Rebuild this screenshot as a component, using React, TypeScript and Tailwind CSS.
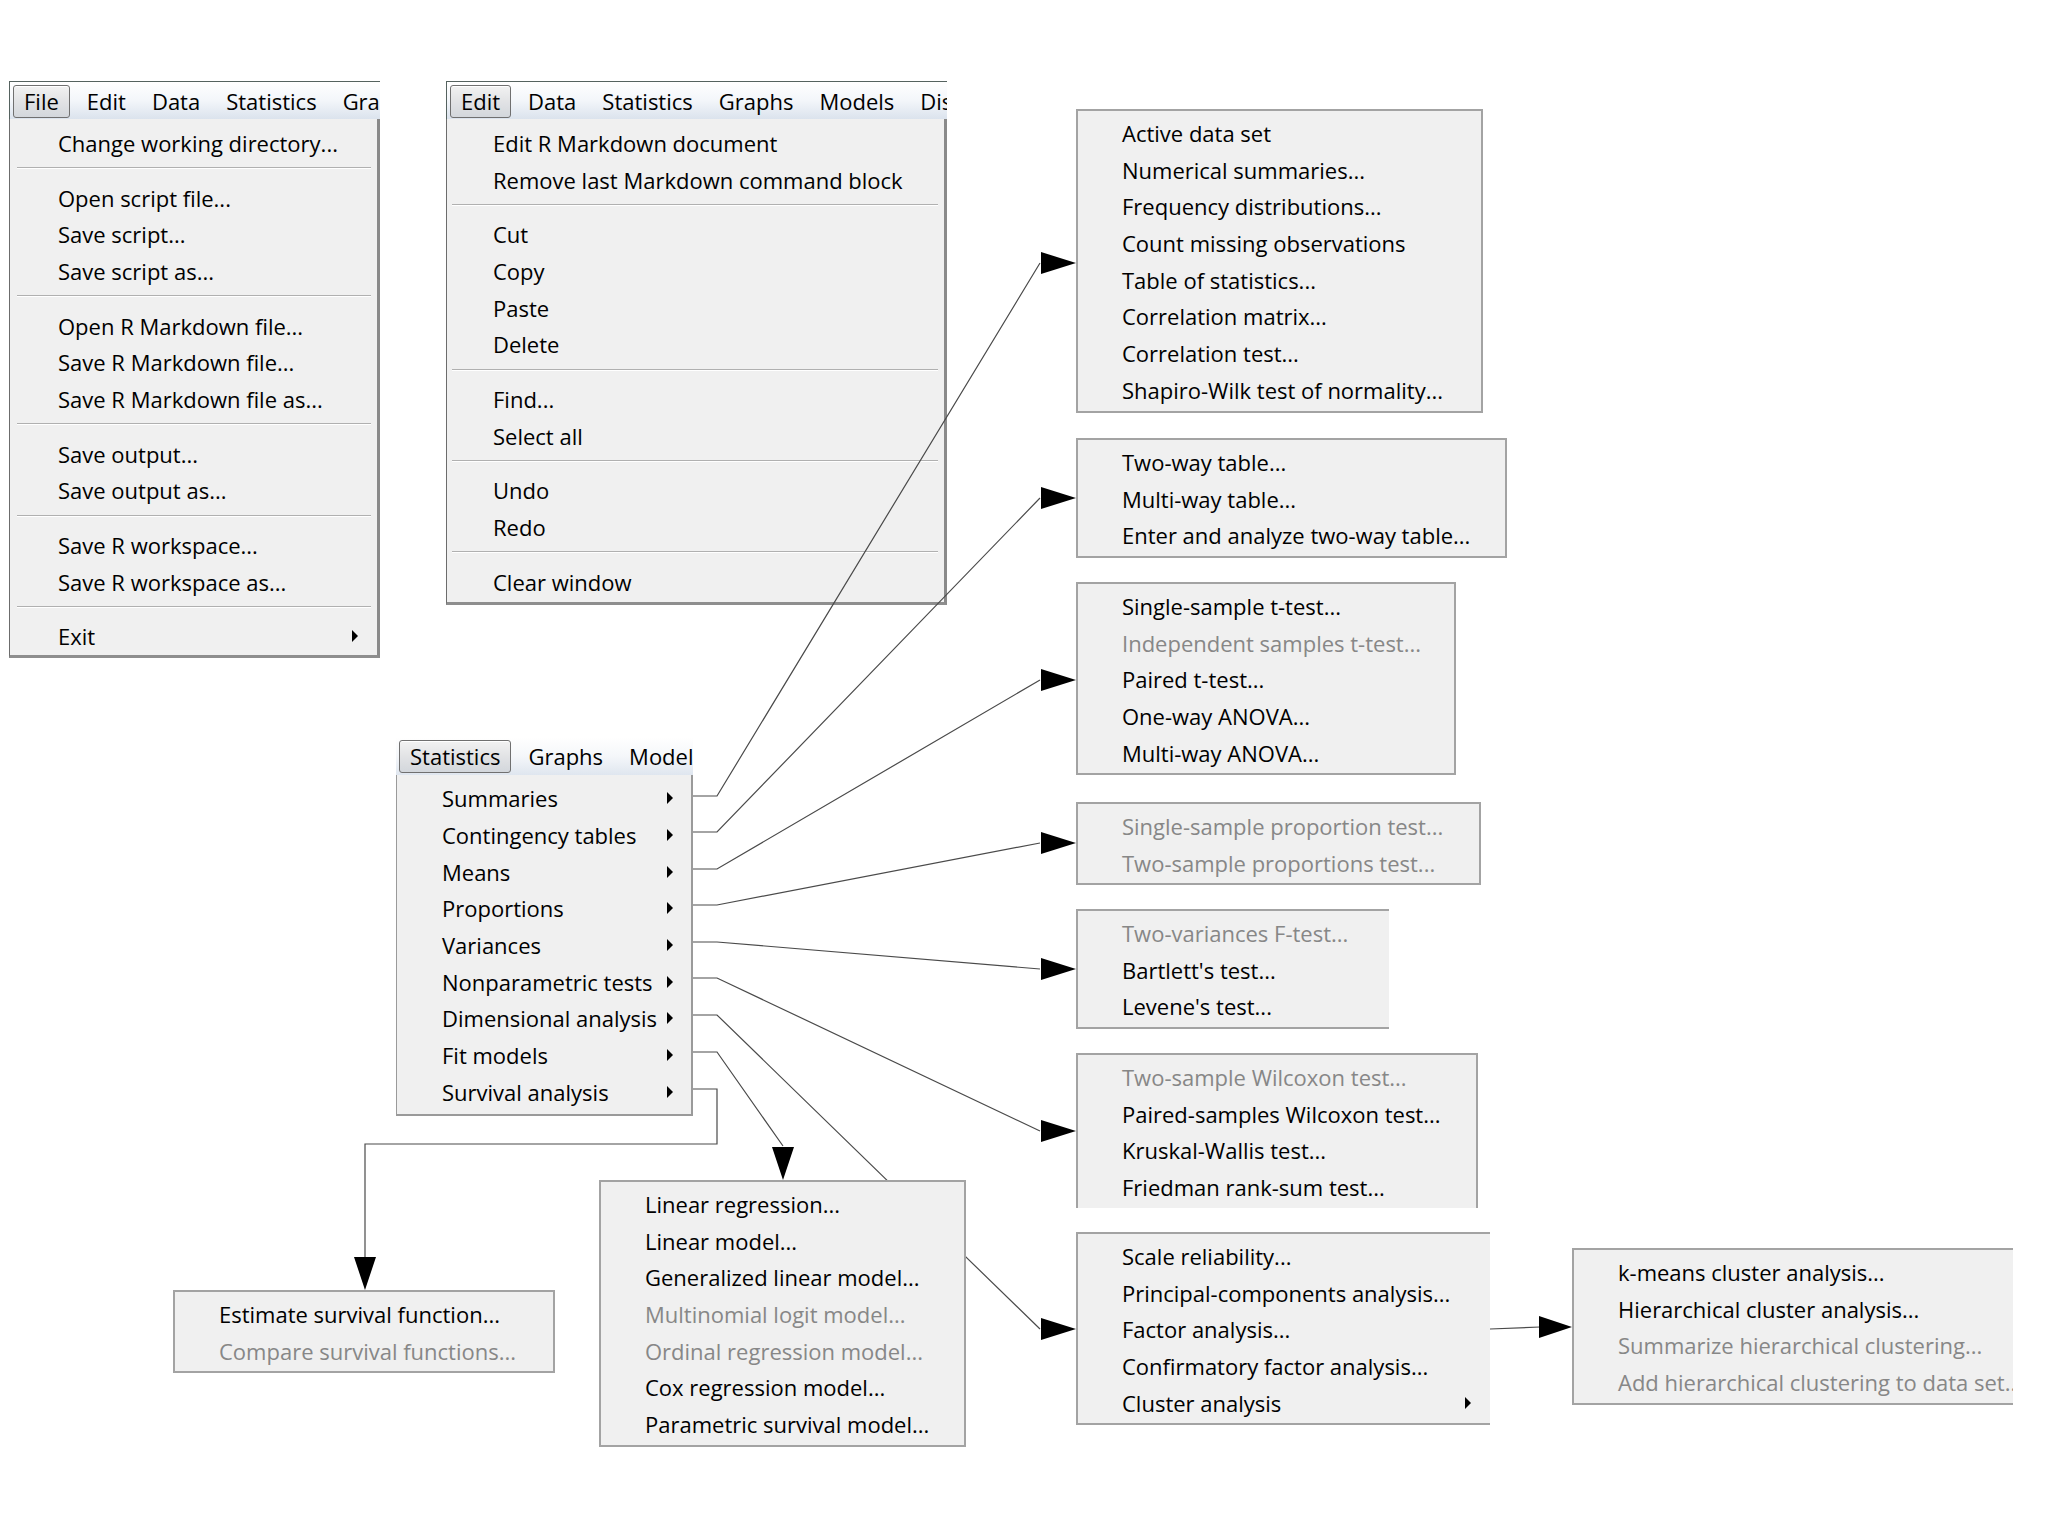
import React from 'react';

type It = { t: string; d?: boolean; a?: boolean } | 'sep';

const S: 'sep' = 'sep';
const i = (t: string, d?: boolean, a?: boolean): It => ({ t, d, a });

const fileItems: It[] = [
  i('Change working directory...'), S,
  i('Open script file...'), i('Save script...'), i('Save script as...'), S,
  i('Open R Markdown file...'), i('Save R Markdown file...'), i('Save R Markdown file as...'), S,
  i('Save output...'), i('Save output as...'), S,
  i('Save R workspace...'), i('Save R workspace as...'), S,
  i('Exit', false, true),
];

const editItems: It[] = [
  i('Edit R Markdown document'), i('Remove last Markdown command block'), S,
  i('Cut'), i('Copy'), i('Paste'), i('Delete'), S,
  i('Find...'), i('Select all'), S,
  i('Undo'), i('Redo'), S,
  i('Clear window'),
];

const statItems: It[] = [
  'Summaries', 'Contingency tables', 'Means', 'Proportions', 'Variances',
  'Nonparametric tests', 'Dimensional analysis', 'Fit models', 'Survival analysis',
].map((t) => i(t, false, true));

const summaries: It[] = [
  i('Active data set'), i('Numerical summaries...'), i('Frequency distributions...'),
  i('Count missing observations'), i('Table of statistics...'), i('Correlation matrix...'),
  i('Correlation test...'), i('Shapiro-Wilk test of normality...'),
];
const contingency: It[] = [i('Two-way table...'), i('Multi-way table...'), i('Enter and analyze two-way table...')];
const means: It[] = [
  i('Single-sample t-test...'), i('Independent samples t-test...', true), i('Paired t-test...'),
  i('One-way ANOVA...'), i('Multi-way ANOVA...'),
];
const proportions: It[] = [i('Single-sample proportion test...', true), i('Two-sample proportions test...', true)];
const variances: It[] = [i('Two-variances F-test...', true), i("Bartlett's test..."), i("Levene's test...")];
const nonparam: It[] = [
  i('Two-sample Wilcoxon test...', true), i('Paired-samples Wilcoxon test...'),
  i('Kruskal-Wallis test...'), i('Friedman rank-sum test...'),
];
const dimensional: It[] = [
  i('Scale reliability...'), i('Principal-components analysis...'), i('Factor analysis...'),
  i('Confirmatory factor analysis...'), i('Cluster analysis', false, true),
];
const cluster: It[] = [
  i('k-means cluster analysis...'), i('Hierarchical cluster analysis...'),
  i('Summarize hierarchical clustering...', true), i('Add hierarchical clustering to data set...', true),
];
const fit: It[] = [
  i('Linear regression...'), i('Linear model...'), i('Generalized linear model...'),
  i('Multinomial logit model...', true), i('Ordinal regression model...', true),
  i('Cox regression model...'), i('Parametric survival model...'),
];
const survival: It[] = [i('Estimate survival function...'), i('Compare survival functions...', true)];

function Rows({ items, pl, ar, sep }: { items: It[]; pl: string; ar: string; sep: string }) {
  return (
    <>
      {items.map((it, k) =>
        it === 'sep' ? (
          <div key={k} className={`h-[18px] pt-[6px] ${sep}`}>
            <div className="h-px bg-[#b0b0b0]" />
            <div className="h-px bg-white" />
          </div>
        ) : (
          <div
            key={k}
            className={`relative flex h-[36.7px] items-center whitespace-nowrap ${pl} ${
              it.d ? 'text-[#878787]' : 'text-black'
            }`}
          >
            {it.t}
            {it.a && (
              <span
                className={`absolute top-1/2 h-0 w-0 -translate-y-1/2 border-y-[6px] border-l-[6px] border-y-transparent border-l-black ${ar}`}
              />
            )}
          </div>
        )
      )}
    </>
  );
}

function Sub({ pos, items, extra = '', ar = 'right-[17px]' }: { pos: string; items: It[]; extra?: string; ar?: string }) {
  return (
    <div
      className={`absolute z-20 overflow-hidden border-2 border-[#a3a3a3] bg-[#f0f0f0] pb-[2.5px] pt-[3.5px] ${pos} ${extra}`}
    >
      <Rows items={items} pl="pl-[44px]" ar={ar} sep="" />
    </div>
  );
}

function BarItem({ t, pressed, first }: { t: string; pressed?: boolean; first?: boolean }) {
  if (pressed)
    return (
      <div className="ml-[3px] flex h-[33px] shrink-0 items-center rounded-[3px] border border-[#707070] bg-linear-to-b from-[#f2f2f2] via-[#e2e3e5] to-[#d3d7dc] px-[10px] pb-[2px] shadow-[inset_0_1px_0_#ffffff]">
        {t}
      </div>
    );
  return (
    <div className={`flex h-[33px] shrink-0 items-center px-[13px] pb-[2px] ${first ? 'ml-[4px]' : ''}`}>{t}</div>
  );
}

export default function App() {
  return (
    <div className="relative h-[1536px] w-[2048px] overflow-hidden bg-white text-[22px] leading-none text-black [font-family:'Open_Sans','Noto_Sans',sans-serif]">
      {/* File menu window */}
      <div className="absolute left-[9px] top-[81px] z-0 flex w-[371px] flex-col">
        <div className="flex h-[38px] items-end overflow-hidden whitespace-nowrap border-l border-t border-[#55625f] bg-linear-to-b from-white via-[#f3f6fa] to-[#dbe3ed] pb-px">
          <BarItem t="File" pressed />
          <BarItem t="Edit" first />
          <BarItem t="Data" />
          <BarItem t="Statistics" />
          <BarItem t="Graphs" />
        </div>
        <div className="border-b-[3px] border-l border-r-[3px] border-b-[#8e8e8e] border-l-[#6c6c6c] border-r-[#8a8a8a] bg-[#f0f0f0] pt-[5.5px]">
          <Rows items={fileItems} pl="pl-[48px]" ar="right-[19px]" sep="ml-[7px] mr-[6px]" />
        </div>
      </div>

      {/* Edit menu window */}
      <div className="absolute left-[446px] top-[81px] z-0 flex w-[501px] flex-col">
        <div className="flex h-[38px] items-end overflow-hidden whitespace-nowrap border-l border-t border-[#55625f] bg-linear-to-b from-white via-[#f3f6fa] to-[#dbe3ed] pb-px">
          <BarItem t="Edit" pressed />
          <BarItem t="Data" first />
          <BarItem t="Statistics" />
          <BarItem t="Graphs" />
          <BarItem t="Models" />
          <BarItem t="Distributions" />
        </div>
        <div className="border-b-[3px] border-l border-r-[3px] border-b-[#8e8e8e] border-l-[#6c6c6c] border-r-[#8a8a8a] bg-[#f0f0f0] pb-[2px] pt-[5.5px]">
          <Rows items={editItems} pl="pl-[46px]" ar="right-[19px]" sep="ml-[5px] mr-[6px]" />
        </div>
      </div>

      {/* connectors */}
      <svg
        className="pointer-events-none absolute left-0 top-0 z-10"
        width={2048}
        height={1536}
        viewBox="0 0 2048 1536"
      >
        <g fill="none" stroke="#4a4a4a" strokeWidth={1.2}>
          <path d="M693 796H717L1040 263" />
          <path d="M693 832H717L1040 498" />
          <path d="M693 869H717L1040 680" />
          <path d="M693 905H717L1040 843" />
          <path d="M693 942H717L1040 969" />
          <path d="M693 978H717L1040 1131" />
          <path d="M693 1015H717L1040 1329" />
          <path d="M693 1052H717L783 1146" />
          <path d="M693 1089H717V1144H365V1258" />
          <path d="M1490 1329L1540 1327" />
        </g>
        <g fill="#000">
          <polygon points="1041,252 1076,263 1041,274" />
          <polygon points="1041,487 1076,498 1041,509" />
          <polygon points="1041,669 1076,680 1041,691" />
          <polygon points="1041,832 1076,843 1041,854" />
          <polygon points="1041,958 1076,969 1041,980" />
          <polygon points="1041,1120 1076,1131 1041,1142" />
          <polygon points="1041,1318 1076,1329 1041,1340" />
          <polygon points="1539,1316 1572,1327 1539,1338" />
          <polygon points="772,1147 794,1147 783,1180" />
          <polygon points="354,1257 376,1257 365,1290" />
        </g>
      </svg>

      {/* Statistics menu */}
      <div className="absolute left-[396px] top-[737px] z-20 flex w-[297px] flex-col">
        <div className="flex h-[38px] items-end overflow-hidden whitespace-nowrap bg-linear-to-b from-white via-[#f5f7fa] to-[#dfe6ef] pb-[2px]">
          <BarItem t="Statistics" pressed />
          <BarItem t="Graphs" first />
          <BarItem t="Models" />
        </div>
        <div className="border-b-2 border-l border-r-2 border-[#9a9a9a] bg-[#f0f0f0] pb-[4px] pt-[5px]">
          <Rows items={statItems} pl="pl-[45px]" ar="right-[18px]" sep="" />
        </div>
      </div>

      <Sub pos="left-[1076px] top-[109px] w-[407px]" items={summaries} />
      <Sub pos="left-[1076px] top-[438px] w-[431px]" items={contingency} />
      <Sub pos="left-[1076px] top-[582px] w-[380px]" items={means} />
      <Sub pos="left-[1076px] top-[802px] w-[405px]" items={proportions} />
      <Sub pos="left-[1076px] top-[909px] w-[313px]" items={variances} extra="border-r-0" />
      <Sub pos="left-[1076px] top-[1053px] w-[402px]" items={nonparam} extra="border-b-0" />
      <Sub pos="left-[1076px] top-[1232px] w-[414px]" items={dimensional} extra="border-r-0" ar="right-[19px]" />
      <Sub pos="left-[1572px] top-[1248px] w-[441px]" items={cluster} extra="border-r-0" />
      <Sub pos="left-[599px] top-[1180px] w-[367px]" items={fit} />
      <Sub pos="left-[173px] top-[1290px] w-[382px]" items={survival} />
    </div>
  );
}
